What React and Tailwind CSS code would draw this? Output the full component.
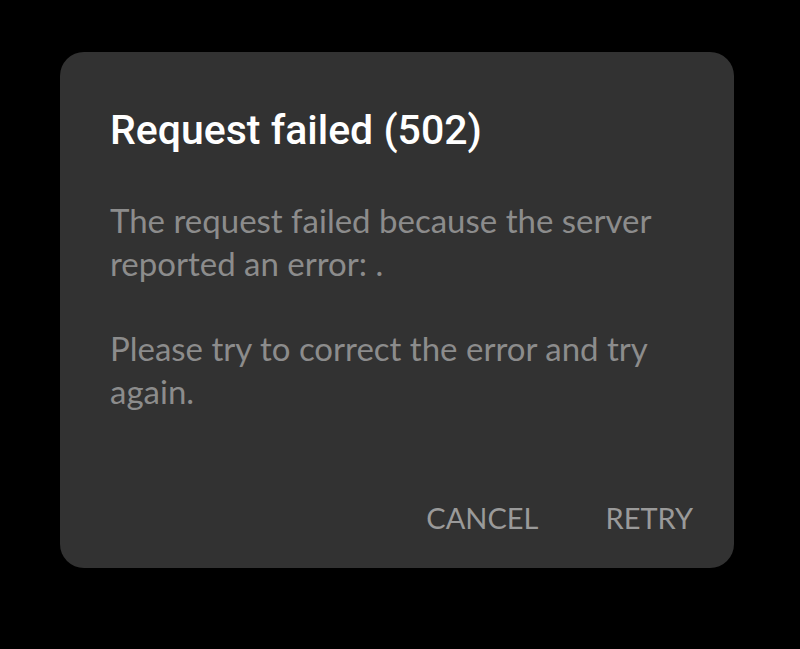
export default function App() {
  return (
    <div className="w-[800px] h-[649px] bg-black pt-[52px] pl-[60px]">
      <div className="w-[674px] h-[516px] rounded-[24px] bg-[#323232] pl-[50px] pr-[41px] pt-[54px] pb-[33px] flex flex-col">
        <h2
          className="text-[41px] leading-[48px] font-medium text-white"
          style={{ fontFamily: "Roboto, sans-serif" }}
        >
          Request failed (502)
        </h2>
        <div
          className="mt-[45px] text-[33px] leading-[43px] text-[#8c8c8c]"
          style={{ fontFamily: "Lato, sans-serif" }}
        >
          <p>The request failed because the server reported an error: .</p>
          <p className="mt-[42px]">Please try to correct the error and try again.</p>
        </div>
        <div className="flex-1" />
        <div
          className="flex justify-end gap-[67px] text-[29px] leading-[35px] text-[#9a9a9a]"
          style={{ fontFamily: "Lato, sans-serif" }}
        >
          <button type="button">CANCEL</button>
          <button type="button">RETRY</button>
        </div>
      </div>
    </div>
  );
}
